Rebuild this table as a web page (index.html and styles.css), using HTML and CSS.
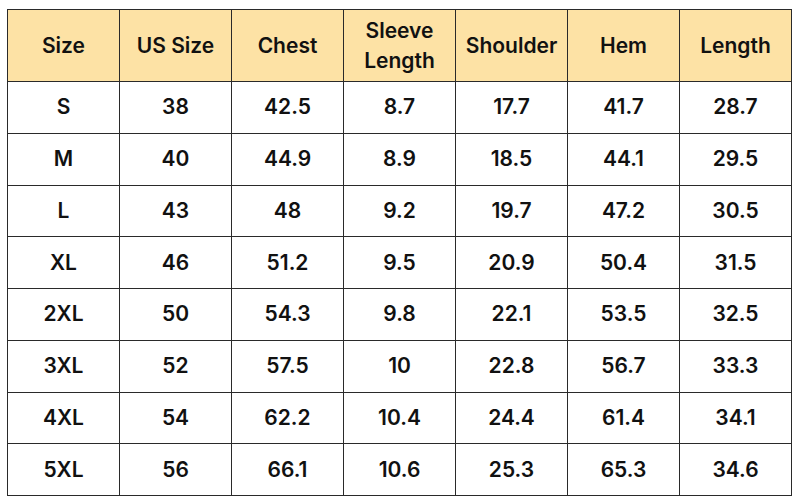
FILE: index.html
```html
<!DOCTYPE html>
<html>
<head>
<meta charset="utf-8">
<link rel="stylesheet" href="styles.css">
</head>
<body>
<div class="wrap">
<table class="sizes">
<thead>
<tr><th>Size</th><th>US Size</th><th>Chest</th><th>Sleeve<br>Length</th><th>Shoulder</th><th>Hem</th><th>Length</th></tr>
</thead>
<tbody>
<tr><td>S</td><td>38</td><td>42.5</td><td>8.7</td><td>17.7</td><td>41.7</td><td>28.7</td></tr>
<tr><td>M</td><td>40</td><td>44.9</td><td>8.9</td><td>18.5</td><td>44.1</td><td>29.5</td></tr>
<tr><td>L</td><td>43</td><td>48</td><td>9.2</td><td>19.7</td><td>47.2</td><td>30.5</td></tr>
<tr><td>XL</td><td>46</td><td>51.2</td><td>9.5</td><td>20.9</td><td>50.4</td><td>31.5</td></tr>
<tr><td>2XL</td><td>50</td><td>54.3</td><td>9.8</td><td>22.1</td><td>53.5</td><td>32.5</td></tr>
<tr><td>3XL</td><td>52</td><td>57.5</td><td>10</td><td>22.8</td><td>56.7</td><td>33.3</td></tr>
<tr><td>4XL</td><td>54</td><td>62.2</td><td>10.4</td><td>24.4</td><td>61.4</td><td>34.1</td></tr>
<tr><td>5XL</td><td>56</td><td>66.1</td><td>10.6</td><td>25.3</td><td>65.3</td><td>34.6</td></tr>
</tbody>
</table>
</div>
</body>
</html>
```
FILE: styles.css
```css
html, body { margin: 0; padding: 0; background: #fff; }
.wrap { padding: 9px 8px 5px 7px; }
.sizes {
  border-collapse: collapse;
  table-layout: fixed;
  width: 785px;
  font-family: Inter, "Open Sans", sans-serif;
  font-weight: 600;
  font-size: 21px;
  color: #111;
}
.sizes th, .sizes td {
  border: 1px solid #2a2a2a;
  text-align: center;
  vertical-align: middle;
  padding: 0;
}
.sizes th {
  background: #fde2a5;
  height: 71px;
  line-height: 30px;
  font-weight: 600;
}
.sizes td { height: 50.75px; line-height: 24px; }
```
